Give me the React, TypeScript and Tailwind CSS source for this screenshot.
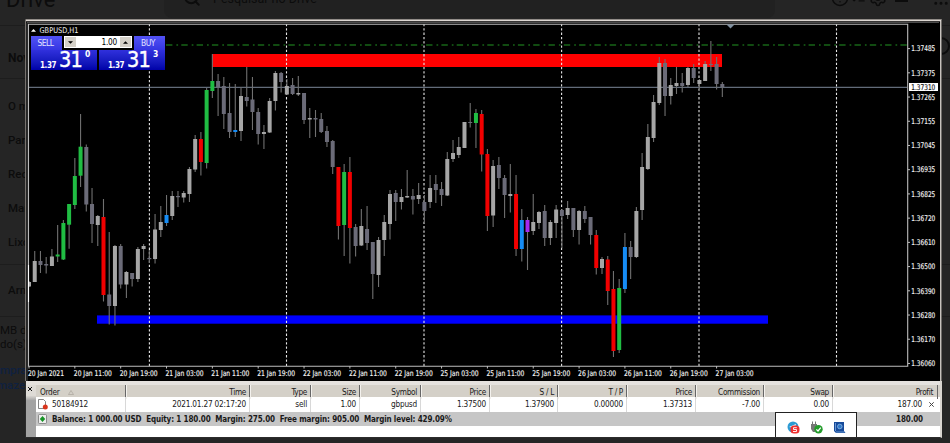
import { Search, Settings, CircleHelp, Grip, ListChecks } from 'lucide-react';

type Kind = 'up' | 'down' | 'green' | 'red' | 'blue' | 'purple';
type Candle = [number, number, number, number, Kind];

const FILL: Record<Kind, string> = {
  up: '#a6a6a6',
  down: '#6b6b78',
  green: '#20bd43',
  red: '#f20000',
  blue: '#168cf5',
  purple: '#a52af0',
};

// high, body top, body bottom, low
const candles: Candle[] = [
  [281, 282, 286.5, 287, 'up'], [251, 261, 282, 282, 'up'], [251, 261, 265, 273, 'down'],
  [257, 264, 265.5, 273.5, 'down'], [249, 256.5, 266, 266, 'up'], [225, 254.5, 256.5, 262, 'green'],
  [220, 223, 259.5, 260, 'green'], [204, 204, 224.7, 248.7, 'green'], [158, 176, 205, 209, 'green'],
  [114, 146.7, 175.7, 187, 'green'], [144.5, 147, 204.5, 211.5, 'down'], [188, 204, 224, 243, 'down'],
  [215, 216, 225, 246, 'up'], [199, 217, 295, 301.5, 'red'], [232, 294.5, 306, 324.5, 'down'],
  [245, 246, 306, 325.5, 'up'], [244, 246, 284.5, 288.5, 'down'], [271, 272, 284.5, 298, 'up'],
  [273, 273, 279, 286.5, 'down'], [247, 249, 279, 282, 'up'], [244, 246, 249, 260, 'up'],
  [250, 258, 259.2, 263, 'down'], [214, 229.5, 259, 263.5, 'up'], [206, 222, 230, 237, 'up'],
  [195, 215, 223, 226, 'blue'], [191, 196, 216, 220, 'up'], [191, 196, 197.2, 207, 'down'],
  [191, 193, 197.5, 202.5, 'up'], [167, 169, 194, 202, 'up'], [135, 139, 169.5, 172, 'up'],
  [132, 139, 162, 175.5, 'red'], [88, 90, 163, 168.5, 'green'], [54, 81, 91, 98, 'green'],
  [74, 81, 87, 116, 'down'], [77, 86, 114, 129, 'down'], [83, 113, 132, 138, 'down'],
  [84, 130, 132, 137, 'blue'], [87, 96, 131, 141, 'up'], [67, 97, 101, 106.5, 'down'],
  [77, 99.5, 112, 130, 'down'], [108, 112, 134, 144.5, 'down'], [125, 132, 134, 149, 'up'],
  [98, 101, 132.5, 133, 'up'], [71, 73, 101, 110.5, 'up'], [72, 73, 82, 92.5, 'down'],
  [79, 86, 94.5, 95, 'up'], [78, 85, 94, 95, 'down'], [76, 93, 94.5, 96, 'up'],
  [93, 93, 120, 124, 'down'], [108, 118, 119.5, 138, 'up'], [110, 118, 119.5, 137, 'down'],
  [113, 119, 132, 133, 'down'], [126, 131, 142, 147, 'down'], [140, 141, 167, 174, 'down'],
  [167, 167, 226, 239.5, 'red'], [164, 172, 225, 256, 'green'], [157, 172, 228, 263.5, 'red'],
  [224, 227, 246, 256.5, 'down'], [209, 226, 245.5, 246, 'up'], [206, 229, 243, 250, 'down'],
  [242, 242, 274, 299, 'down'], [237, 240, 275, 287, 'up'], [215, 222, 240, 256, 'up'],
  [190, 194, 224, 239.5, 'up'], [190, 193, 202, 221, 'down'], [189, 197, 202, 209.5, 'up'],
  [170, 196, 197.5, 198, 'up'], [189, 196, 199.5, 214.5, 'down'], [183, 195, 199, 204, 'up'],
  [195, 202, 211, 223, 'down'], [175, 188, 202, 208, 'up'], [175, 184, 190, 203, 'down'],
  [182, 189, 195, 206, 'down'], [152, 159, 195.5, 196, 'up'], [140, 153, 159, 162, 'up'],
  [137, 147, 155, 158, 'up'], [122, 122, 148, 148, 'up'], [103, 122, 123, 127.5, 'down'],
  [109, 113, 123, 148, 'green'], [110, 114, 154.5, 171.5, 'red'], [149, 154, 216, 231, 'red'],
  [160, 166, 215.5, 227, 'up'], [157, 165, 178, 189, 'down'], [175, 178, 195, 218, 'down'],
  [164, 194, 196, 212.5, 'up'], [175, 194, 249, 256, 'red'], [209, 220, 249, 261.5, 'blue'],
  [217, 220, 232, 270, 'purple'], [194, 222, 231, 235, 'up'], [211, 212, 223, 229, 'up'],
  [205, 211, 238, 246, 'down'], [220, 222, 238, 245, 'up'], [205, 209.5, 223, 238, 'up'],
  [209, 210, 216, 248, 'down'], [201, 208, 215, 219, 'up'], [208, 208, 230, 237, 'down'],
  [210, 211, 230, 244.5, 'up'], [206, 211, 219, 223, 'down'], [217, 217, 235, 244.5, 'down'],
  [230, 235, 268, 274.5, 'red'], [257, 259, 268, 274, 'up'], [256, 259.5, 291, 305, 'red'],
  [271, 289, 351, 357, 'red'], [279, 288, 350, 353, 'green'], [233, 247, 289, 293, 'blue'],
  [241, 247, 257, 279, 'down'], [207, 211, 257, 258, 'up'], [153, 167, 210, 220, 'up'],
  [124, 137, 169, 170, 'up'], [95, 102, 138, 142, 'up'], [57, 63, 103, 105, 'up'],
  [59, 63, 96, 116, 'down'], [78, 85, 96, 104.5, 'up'], [67, 83, 86, 94, 'up'],
  [73, 83, 86, 92.5, 'down'], [67, 68, 85, 87, 'up'], [64, 68, 78, 83, 'down'],
  [79, 80, 84, 90, 'up'], [61, 64, 81, 81, 'up'], [41, 64, 65, 71, 'down'],
  [57, 64, 84, 89.5, 'down'], [82, 84, 87, 97, 'down'],
];

const prices = [
  '1.37485', '1.37375', '1.37265', '1.37155', '1.37045', '1.36935', '1.36825',
  '1.36720', '1.36610', '1.36500', '1.36390', '1.36280', '1.36170', '1.36060',
];

const times = [
  '20 Jan 2021', '20 Jan 11:00', '20 Jan 19:00', '21 Jan 03:00', '21 Jan 11:00', '21 Jan 19:00',
  '22 Jan 03:00', '22 Jan 11:00', '22 Jan 19:00', '25 Jan 03:00', '25 Jan 11:00', '25 Jan 19:00',
  '26 Jan 03:00', '26 Jan 11:00', '26 Jan 19:00', '27 Jan 03:00',
];

const columns = [
  { label: 'Time', value: '2021.01.27 02:17:20' },
  { label: 'Type', value: 'sell' },
  { label: 'Size', value: '1.00' },
  { label: 'Symbol', value: 'gbpusd' },
  { label: 'Price', value: '1.37500' },
  { label: 'S / L', value: '1.37900' },
  { label: 'T / P', value: '0.00000' },
  { label: 'Price', value: '1.37313' },
  { label: 'Commission', value: '-7.00' },
  { label: 'Swap', value: '0.00' },
];

const GRID =
  'grid grid-cols-[90px_124px_61px_49px_61px_69px_68px_69px_69px_68px_69px_105px]';

function Chart() {
  return (
    <svg
      viewBox="25 19 917 362"
      className="block h-[362px] w-[917px]"
      fontFamily="'DejaVu Sans Condensed', 'DejaVu Sans', sans-serif"
      fontSize="7.8"
    >
      <rect x="25" y="19" width="917" height="362" fill="#000" />
      {/* window frame */}
      <path d="M25.5 381V19.5H942" fill="none" stroke="#77736f" />
      <path d="M26 20.5H941" stroke="#ddd7d2" strokeWidth="1.4" />
      <path d="M940.8 20V381" stroke="#ddd7d2" strokeWidth="1.4" />
      <path d="M27 381V22.5H939" fill="none" stroke="#4b4b4b" />
      {/* levels */}
      <path d="M28.5 87.3H907" stroke="#626b79" strokeWidth="1.2" />
      <path d="M166 45H907" stroke="#176417" strokeWidth="1.5" strokeDasharray="6.4 4 1.7 3.2" />
      <rect x="212" y="54" width="510" height="13" fill="#ff0000" />
      <rect x="97" y="315.4" width="671" height="8.3" fill="#0000ff" />
      {[149.4, 286.5, 424, 561.6, 699, 836.5].map((x) => (
        <path key={x} d={`M${x} 24V366`} stroke="#e6e6e6" strokeWidth="1.1" strokeDasharray="2.3 2" />
      ))}
      {candles.map(([high, top, bottom, low, kind], i) => {
        const x = 29 + i * 5.73;
        return (
          <g key={i}>
            <path d={`M${x} ${high}V${low}`} stroke="#707070" strokeWidth="1.1" />
            <rect
              x={i === 0 ? 29 : x - 2}
              y={top}
              width={i === 0 ? 2 : 4}
              height={bottom - top}
              fill={FILL[kind]}
            />
          </g>
        );
      })}
      <path d="M28.5 24.3H907.7V366.3H28.5Z" fill="none" stroke="#bdbdbd" strokeWidth="1.1" />
      <path d="M28.5 265V302" stroke="#fff" strokeWidth="1.1" />
      <path d="M726.5 24.5h8l-4 4z" fill="#8192a2" />
      {/* price scale */}
      {prices.map((p, i) => {
        const y = 48.6 + i * 24.22;
        return (
          <g key={p}>
            <path d={`M908 ${y}h2`} stroke="#bdbdbd" />
            <text
              x="911.3"
              y={y + 2.7}
              fill="#f2f2f2"
              stroke="#f2f2f2"
              strokeWidth=".15"
              textLength="24"
              lengthAdjust="spacingAndGlyphs"
            >
              {p}
            </text>
          </g>
        );
      })}
      <rect x="909" y="83" width="29" height="8" fill="#fff" />
      <text
        x="911.3"
        y="89.9"
        fill="#111"
        stroke="#111"
        strokeWidth=".15"
        textLength="24"
        lengthAdjust="spacingAndGlyphs"
      >
        1.37310
      </text>
      {/* time scale */}
      {times.map((t, i) => {
        const x = 28.5 + i * 45.84;
        return (
          <g key={t}>
            <path d={`M${x + 0.5} 366v2.5`} stroke="#bdbdbd" />
            <text
              x={x - 0.5}
              y="375.6"
              fill="#f2f2f2"
              stroke="#f2f2f2"
              strokeWidth=".15"
              textLength={i === 0 ? 36 : 38}
              lengthAdjust="spacingAndGlyphs"
            >
              {t}
            </text>
          </g>
        );
      })}
      <path d="M31 31.7l2.5-2.8 2.5 2.8z" fill="#fff" />
      <text x="39.5" y="32.8" fill="#f2f2f2" textLength="39" lengthAdjust="spacingAndGlyphs">
        GBPUSD,H1
      </text>
    </svg>
  );
}

function Quote({ pips, point }: { pips: string; point: string }) {
  return (
    <div className="flex h-[20px] w-[66px] items-end bg-linear-to-b from-[#3030dc] to-[#0000a8] pl-[9px] text-white">
      <span className="w-[19px] text-[8px] leading-[8px] font-bold tracking-[-0.4px]">1.37</span>
      <span className="w-[26px] text-[21.5px] leading-[20px] tracking-[-0.8px] [-webkit-text-stroke:0.4px_white]">
        {pips}
      </span>
      <span className="self-start text-[8.5px] leading-[8px] font-bold">{point}</span>
    </div>
  );
}

function OneClick() {
  return (
    <div className="absolute top-[17px] left-[6px] w-[134px]">
      <div className="flex h-[14px] justify-between text-[8px] tracking-[-0.2px] text-[#e2e2ff]">
        <div className="flex w-[31px] items-center justify-center bg-linear-to-b from-[#5252f5] to-[#3535e2] pr-[2px] text-[8.5px] tracking-[-0.5px]">
          SELL
        </div>
        <div className="flex h-[12px] w-[68px] bg-white text-black">
          <div className="m-px flex w-[11px] items-center justify-center bg-[#d4d0c8]">
            <svg viewBox="0 0 6 3" className="h-[3px] w-[5px]"><path d="M0 0h6L3 3z" /></svg>
          </div>
          <div className="flex-1 pr-[2px] text-right text-[8.2px] leading-[13px]">1.00</div>
          <div className="m-px flex w-[11px] items-center justify-center bg-[#d4d0c8]">
            <svg viewBox="0 0 6 3" className="h-[3px] w-[5px]"><path d="M0 3h6L3 0z" /></svg>
          </div>
        </div>
        <div className="flex w-[31px] items-center justify-center bg-linear-to-b from-[#5252f5] to-[#3535e2] pr-[3px] text-[8.5px] tracking-[-0.5px]">
          BUY
        </div>
      </div>
      <div className="flex justify-between">
        <Quote pips="31" point="0" />
        <Quote pips="31" point="3" />
      </div>
    </div>
  );
}

function Tray() {
  return (
    <div className="absolute right-[83px] bottom-0 flex h-[25px] w-[82px] items-center justify-center gap-[10px] border border-b-0 border-[#222] bg-white pt-[5px]">
      <svg viewBox="0 0 13 13" className="size-[13px]">
        <circle cx="6" cy="6" r="5.5" fill="#2d9bd4" />
        <path d="M2 6l7-3-1 4" fill="#fff" />
        <rect x="3.5" y="4.5" width="9" height="8" rx="3.5" fill="#ee3030" />
        <path d="M9.8 6.7H6.5v1.8h3v2H6" fill="none" stroke="#fff" strokeWidth=".9" />
      </svg>
      <svg viewBox="0 0 13 13" className="size-[13px]">
        <path d="M2.5 .5v2.5M5.5 .5v2.5" stroke="#777" />
        <path d="M1 3h6v5l-2 3H3L1 8z" fill="#777" />
        <circle cx="8.5" cy="8.3" r="4.2" fill="#239b2b" />
        <path d="M6.4 8.4L8 10l2.8-3.4" fill="none" stroke="#fff" strokeWidth="1.2" />
      </svg>
      <svg viewBox="0 0 13 13" className="size-[13px]">
        <path d="M1 1h10v9l1.5 2H3L1 10z" fill="#174b9b" />
        <path d="M2.5 2v8M3 11h8.5" stroke="#7fa8dd" strokeWidth=".8" />
        <circle cx="6.8" cy="5.5" r="2.3" fill="#2f78c8" stroke="#9ec7ef" strokeWidth=".7" />
      </svg>
    </div>
  );
}

function Terminal() {
  return (
    <div className="relative flex h-[57px] w-[917px] flex-col border-r-2 border-b border-l border-[#2c2c2c] border-r-[#d8d4d0] bg-[#e5e2de] text-[8.2px] tracking-[-0.3px] text-[#1a1a1a]">
      <div className="h-[4px]" />
      <div className="flex flex-1">
        <div className="w-[10px] bg-linear-to-b from-[#dedbd6] from-20% to-[#a3a3a3] to-30%">
          <svg viewBox="0 0 4 4" className="mt-[2px] ml-[2px] size-[4px]">
            <path d="M0 0l4 4M4 0L0 4" stroke="#111" strokeWidth="1" />
          </svg>
        </div>
        <div className="flex flex-1 flex-col bg-white">
          <div className={`${GRID} h-[12px] bg-[#d4d0c8] leading-[14px]`}>
            <div className="flex items-center gap-[9px] border-r border-[#666] pl-[4px]">
              Order
              <svg viewBox="0 0 6 5" className="h-[5px] w-[6px]">
                <path d="M.5 4.5L3 .5l2.5 4z" fill="none" stroke="#aaa59c" strokeWidth=".7" />
              </svg>
            </div>
            {columns.map((c, i) => (
              <div key={i} className="border-r border-l border-r-[#666] border-l-[#f4f2ee] pr-[3px] text-right">
                {c.label}
              </div>
            ))}
            <div className="border-r border-l border-r-[#666] border-l-[#f4f2ee] pr-[4px] text-right">Profit</div>
          </div>
          <div className={`${GRID} h-[15px] leading-[15px] tracking-[-0.2px]`}>
            <div className="flex items-center gap-[4px] border-r border-[#d8d8d8] pl-[2px]">
              <svg viewBox="0 0 10 11" className="h-[11px] w-[10px]">
                <path d="M.5 .5h5l2 2v7h-7z" fill="#fff" stroke="#666" strokeWidth=".8" />
                <circle cx="7.3" cy="8" r="2.5" fill="#d9341c" />
              </svg>
              50184912
            </div>
            {columns.map((c, i) => (
              <div key={i} className="border-r border-[#d8d8d8] pr-[3px] text-right">
                {c.value}
              </div>
            ))}
            <div className="flex items-center justify-end gap-[7px] pr-[4px]">
              187.00
              <svg viewBox="0 0 5 5" className="size-[5px]">
                <path d="M.3 .3l4.4 4.4M4.7 .3L.3 4.7" stroke="#444" strokeWidth="1" />
              </svg>
            </div>
          </div>
          <div className="flex h-[14px] items-center bg-[#c6c6c6] pr-[17px] pl-[2px] text-[8px] font-bold tracking-[-0.13px]">
            <svg viewBox="0 0 9 10" className="mr-[5px] h-[10px] w-[9px]">
              <rect x=".5" y=".5" width="8" height="9" rx="1" fill="#eee" stroke="#777" strokeWidth=".8" />
              <path d="M4.5 2L7.2 5l-2.7 3-2.7-3z" fill="#169326" />
            </svg>
            <span className="flex-1 pt-px whitespace-pre">
              {'Balance: 1 000.00 USD  Equity: 1 180.00  Margin: 275.00  Free margin: 905.00  Margin level: 429.09%'}
            </span>
            <span className="pt-px">180.00</span>
          </div>
        </div>
      </div>
      <Tray />
    </div>
  );
}

function Backdrop() {
  return (
    <div className="h-full font-['Roboto',sans-serif] text-[#0c0c0c]">
      <div className="flex h-[26px] items-start border-b border-[#1d1d1d]">
        <div className="-mt-[13px] w-[166px] pl-[6px] text-[22px] leading-[26px]">Drive</div>
        <div className="flex h-[18px] w-[618px] items-start rounded-b-lg bg-[#212121] pl-[19px]">
          <Search className="-mt-[11px] size-[18px]" strokeWidth={2.6} />
          <span className="-mt-[10px] ml-[12px] text-[12.5px] leading-[18px]">Pesquisar no Drive</span>
        </div>
        <div className="-mt-[11px] flex gap-[2px] pl-[56px]">
          <CircleHelp className="size-[18px]" />
          <ListChecks className="size-[15px]" />
          <Settings className="ml-px size-[18px]" />
          <span className="ml-[6px] size-[13px] border-2" />
          <Grip className="ml-[22px] size-[18px]" />
        </div>
      </div>
      <div className="flex h-[53px] items-center justify-between border-b border-[#1d1d1d] pl-[8px] text-[12px] font-bold">
        <span className="pt-[12px]">Novo</span>
        <span className="mt-[-12px] size-[18px] rounded-full border-2" />
      </div>
      <div className="flex h-[186px] flex-col border-b border-[#1d1d1d] pt-[10px] pl-[8px] text-[11.5px] leading-[34px] font-medium">
        <span>O meu disco</span>
        <span>Partilhados</span>
        <span>Recentes</span>
        <span>Marcados</span>
        <span>Lixo</span>
      </div>
      <div className="flex h-[52px] items-center border-b border-[#1d1d1d] pl-[8px] text-[11.5px] font-medium">
        Armazenamento
      </div>
      <div className="pt-[6px] text-[11.5px] leading-[14px]">
        <p>MB de</p>
        <p>do(s)</p>
      </div>
      <div className="pt-[12px] text-[11.5px] leading-[15px] font-medium text-[#0f2140]">
        <p>mprar</p>
        <p className="-ml-[3px]">mazen</p>
      </div>
    </div>
  );
}

export default function App() {
  return (
    <div className="relative h-[443px] w-[950px] overflow-hidden bg-[#252525]">
      <Backdrop />
      {/* Trading window floating over the page */}
      <div className="absolute top-[19px] left-[25px] font-['DejaVu_Sans_Condensed','DejaVu_Sans',sans-serif]">
        <Chart />
        <OneClick />
        <Terminal />
      </div>
    </div>
  );
}
